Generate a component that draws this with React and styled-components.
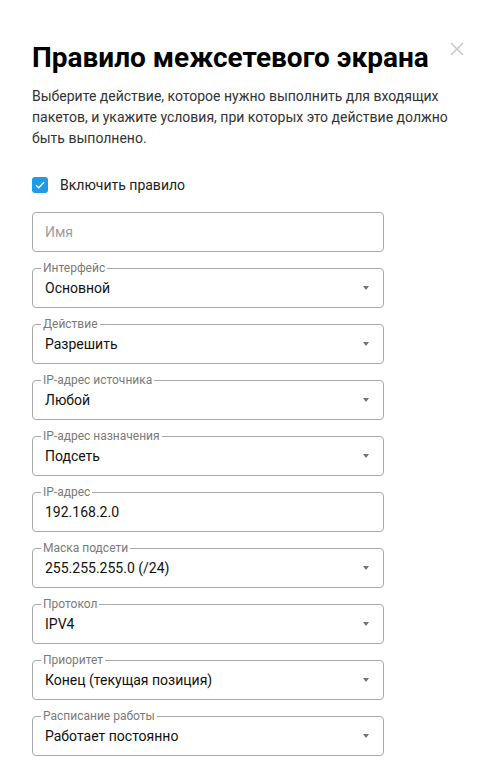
import React from "react";
import styled, { createGlobalStyle } from "styled-components";

const GlobalStyle = createGlobalStyle`
  html, body {
    margin: 0;
    padding: 0;
    background: #ffffff;
  }

  body {
    font-family: Roboto, "Noto Sans", "Liberation Sans", sans-serif;
  }

  * {
    box-sizing: border-box;
  }
`;

const Modal = styled.div`
  position: relative;
  width: 500px;
  min-height: 784px;
  padding: 40px 32px 28px;
  background: #ffffff;
`;

const CloseButton = styled.button`
  position: absolute;
  top: 42px;
  right: 36px;
  width: 14px;
  height: 14px;
  padding: 0;
  border: none;
  background: transparent;
  cursor: pointer;

  svg {
    display: block;
  }
`;

const Title = styled.h1`
  margin: 0;
  font-size: 28px;
  line-height: 36px;
  font-weight: 700;
  color: #000000;
`;

const Description = styled.p`
  margin: 10px 0 0;
  font-size: 14px;
  line-height: 21px;
  color: #333333;
`;

const CheckRow = styled.label`
  display: flex;
  align-items: center;
  gap: 12px;
  margin-top: 28px;
  font-size: 14px;
  line-height: 16px;
  color: #222222;
`;

const CheckBox = styled.span`
  display: flex;
  align-items: center;
  justify-content: center;
  width: 16px;
  height: 16px;
  border-radius: 3px;
  background: ${(props) => (props.checked ? "#1d9be6" : "#ffffff")};
  border: ${(props) => (props.checked ? "none" : "1px solid #9e9e9e")};
`;

const Fields = styled.div`
  display: flex;
  flex-direction: column;
  gap: 16px;
  width: 352px;
  margin-top: 19px;
`;

const Field = styled.div`
  position: relative;
  display: flex;
  align-items: center;
  height: 40px;
  padding: 0 12px;
  border: 1px solid #a8a8a8;
  border-radius: 4px;
`;

const Legend = styled.span`
  position: absolute;
  top: -7px;
  left: 8px;
  padding: 0 2px;
  background: #ffffff;
  font-size: 12px;
  line-height: 12px;
  color: #7a7a7a;
`;

const Value = styled.span`
  flex: 1;
  font-size: 14px;
  color: ${(props) => (props.placeholder ? "#9e9e9e" : "#111111")};
`;

const Arrow = styled.span`
  width: 0;
  height: 0;
  margin-right: 2px;
  border-left: 3.5px solid transparent;
  border-right: 3.5px solid transparent;
  border-top: 4px solid #757575;
`;

const fields = [
  { label: "Интерфейс", value: "Основной", select: true },
  { label: "Действие", value: "Разрешить", select: true },
  { label: "IP-адрес источника", value: "Любой", select: true },
  { label: "IP-адрес назначения", value: "Подсеть", select: true },
  { label: "IP-адрес", value: "192.168.2.0" },
  { label: "Маска подсети", value: "255.255.255.0 (/24)", select: true },
  { label: "Протокол", value: "IPV4", select: true },
  { label: "Приоритет", value: "Конец (текущая позиция)", select: true },
  { label: "Расписание работы", value: "Работает постоянно", select: true },
];

const App = () => {
  return (
    <>
      <GlobalStyle />
      <Modal>
        <CloseButton aria-label="Закрыть">
          <svg width="14" height="14" viewBox="0 0 14 14">
            <path
              d="M1.5 1.5 L12.5 12.5 M12.5 1.5 L1.5 12.5"
              stroke="#c8c8c8"
              strokeWidth="1.6"
              strokeLinecap="round"
            />
          </svg>
        </CloseButton>
        <Title>Правило межсетевого экрана</Title>
        <Description>
          Выберите действие, которое нужно выполнить для входящих пакетов, и
          укажите условия, при которых это действие должно быть выполнено.
        </Description>
        <CheckRow>
          <CheckBox checked>
            <svg width="10" height="8" viewBox="0 0 10 8">
              <path
                d="M1 4.2 L3.7 6.8 L9 1.2"
                fill="none"
                stroke="#ffffff"
                strokeWidth="1.4"
              />
            </svg>
          </CheckBox>
          Включить правило
        </CheckRow>
        <Fields>
          <Field>
            <Value placeholder>Имя</Value>
          </Field>
          {fields.map((f) => (
            <Field key={f.label}>
              <Legend>{f.label}</Legend>
              <Value>{f.value}</Value>
              {f.select && <Arrow />}
            </Field>
          ))}
        </Fields>
      </Modal>
    </>
  );
};

export default App;
